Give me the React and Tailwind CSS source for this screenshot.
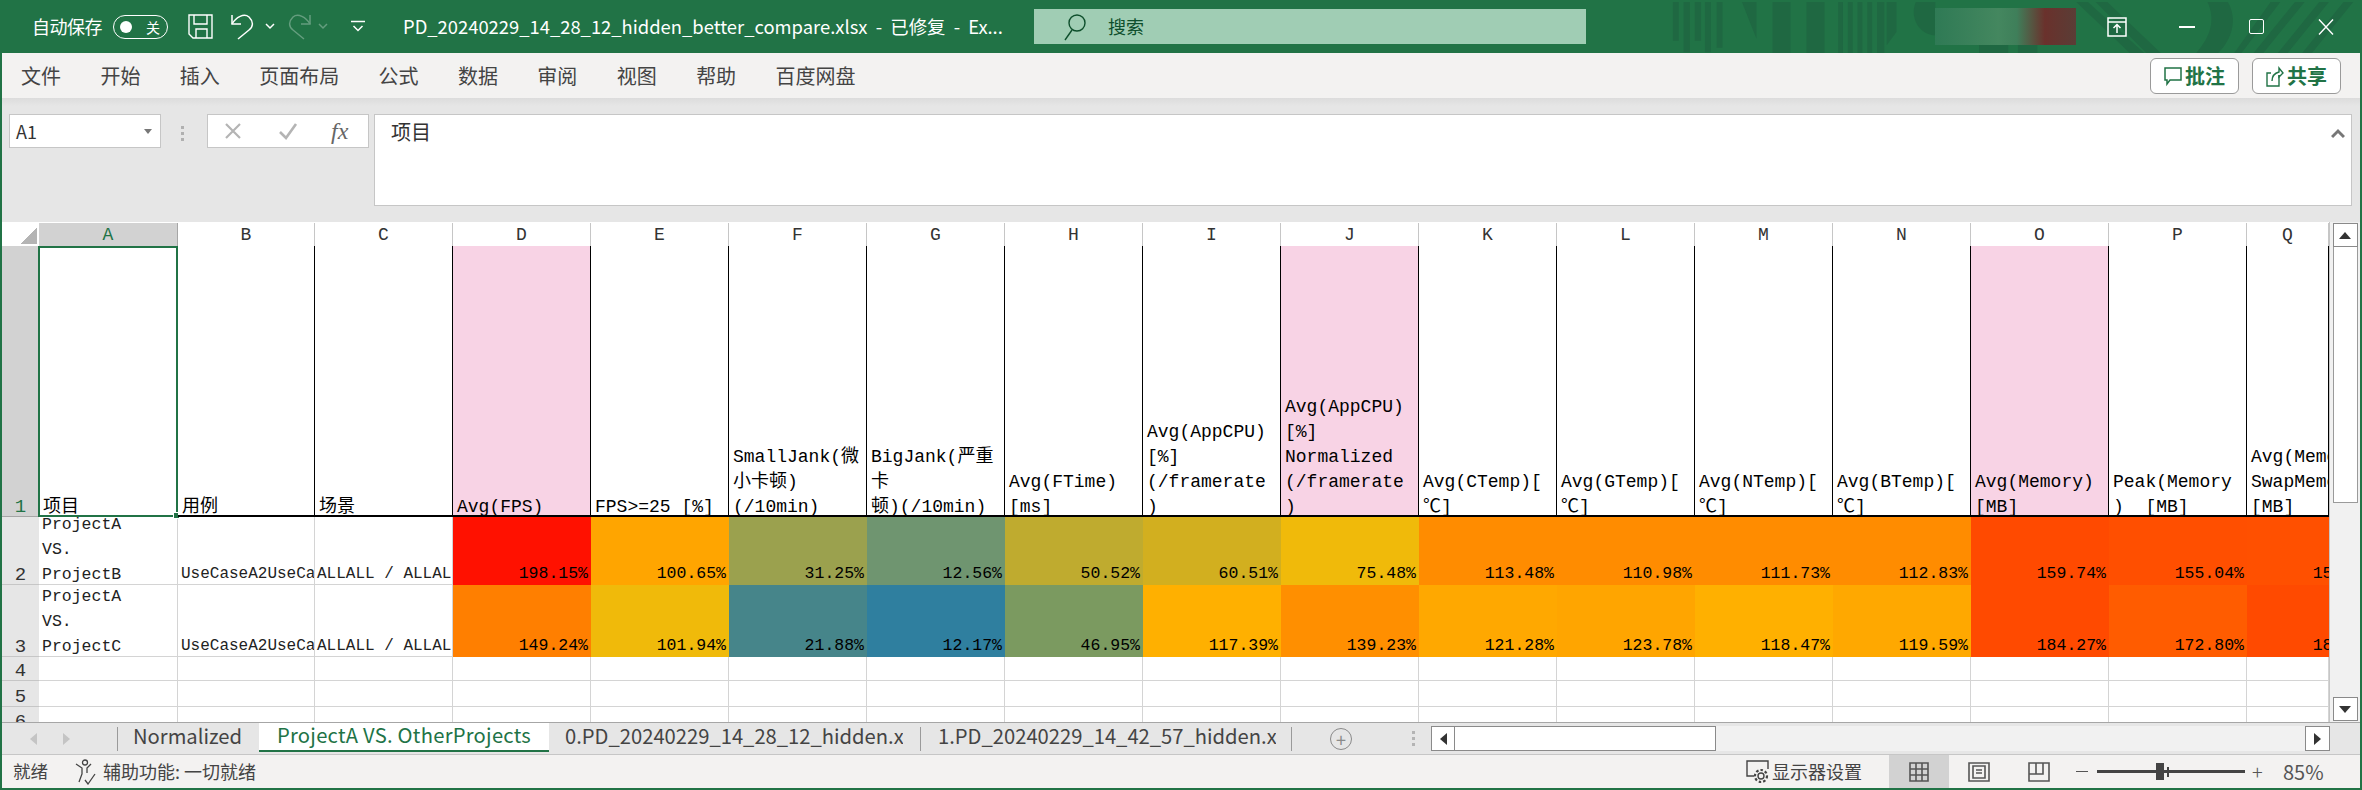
import React from 'react';

const GREEN = '#217346';
const columnsClass = 'grid grid-cols-[37px_139px_137px_138px_138px_138px_138px_138px_138px_138px_138px_138px_138px_138px_138px_138px_138px_82px]';
const columnLetters = ['A', 'B', 'C', 'D', 'E', 'F', 'G', 'H', 'I', 'J', 'K', 'L', 'M', 'N', 'O', 'P', 'Q'];
const ribbonTabs = ['文件', '开始', '插入', '页面布局', '公式', '数据', '审阅', '视图', '帮助', '百度网盘'];

const headers = [
  { lines: ['项目'] },
  { lines: ['用例'] },
  { lines: ['场景'] },
  { lines: ['Avg(FPS)'], pink: true },
  { lines: ['FPS>=25 [%]'] },
  { lines: ['SmallJank(微', '小卡顿)', '(/10min)'] },
  { lines: ['BigJank(严重', '卡', '顿)(/10min)'] },
  { lines: ['Avg(FTime)', '[ms]'] },
  { lines: ['Avg(AppCPU)', '[%]', '(/framerate', ')'] },
  { lines: ['Avg(AppCPU)', '[%]', 'Normalized', '(/framerate', ')'], pink: true },
  { lines: ['Avg(CTemp)[', '℃]'] },
  { lines: ['Avg(GTemp)[', '℃]'] },
  { lines: ['Avg(NTemp)[', '℃]'] },
  { lines: ['Avg(BTemp)[', '℃]'] },
  { lines: ['Avg(Memory)', '[MB]'], pink: true },
  { lines: ['Peak(Memory', ')  [MB]'] },
  { lines: ['Avg(Memory', 'SwapMemory', '[MB]'] },
];

const rows = [
  {
    num: 2,
    h: 'ProjectB',
    values: [
      ['198.15%', 'bg-[#ff1100]'], ['100.65%', 'bg-[#ffa500]'], ['31.25%', 'bg-[#9ba14e]'], ['12.56%', 'bg-[#6f9570]'],
      ['50.52%', 'bg-[#bfab2f]'], ['60.51%', 'bg-[#d2af1f]'], ['75.48%', 'bg-[#f0ba0a]'], ['113.48%', 'bg-[#ff8c00]'],
      ['110.98%', 'bg-[#ff8c00]'], ['111.73%', 'bg-[#ff8c00]'], ['112.83%', 'bg-[#ff8c00]'], ['159.74%', 'bg-[#ff4a00]'],
      ['155.04%', 'bg-[#ff4f00]'], ['157.31%', 'bg-[#ff5000]'],
    ],
  },
  {
    num: 3,
    h: 'ProjectC',
    values: [
      ['149.24%', 'bg-[#ff7f00]'], ['101.94%', 'bg-[#f0ba0a]'], ['21.88%', 'bg-[#46858a]'], ['12.17%', 'bg-[#2f7f9f]'],
      ['46.95%', 'bg-[#7b9a60]'], ['117.39%', 'bg-[#ffb000]'], ['139.23%', 'bg-[#ff8f00]'], ['121.28%', 'bg-[#ffa800]'],
      ['123.78%', 'bg-[#ffa500]'], ['118.47%', 'bg-[#ffb000]'], ['119.59%', 'bg-[#ffa800]'], ['184.27%', 'bg-[#ff4a00]'],
      ['172.80%', 'bg-[#ff5c00]'], ['181.46%', 'bg-[#ff4a00]'],
    ],
  },
];

const Undo = ({ className }) => (
  <svg width="24" height="26" viewBox="0 0 24 26" fill="none" stroke="currentColor" strokeWidth="1.5" className={className}>
    <path d="M2 1V10H11" />
    <path d="M2 10C6 3 14 -1 19 3C24 8 23 13 19 16L8 25" />
  </svg>
);

const Chevron = ({ className }) => (
  <svg width="10" height="7" viewBox="0 0 10 7" fill="none" stroke="currentColor" strokeWidth="1.5" className={className}>
    <path d="M1 1L5 5L9 1" />
  </svg>
);

const TitlePattern = () => (
  <svg viewBox="0 0 1568 159" preserveAspectRatio="none" className="absolute right-0 top-0 w-[762px] h-[53px]" fill="#1f6842">
    <path d="M150 6h12v116h-12zM172 6h13v151h-13zM195 6h13v116h-13zM216 6h12v151h-12zM240 6h12v137h-12z" />
    <path d="M292 6h30v110z" />
    <path d="M355 6h37v153h-37zM425 6h37v153h-37z" />
    <path d="M490 6h10v153h-10zM510 6h10v153h-10zM530 6h10v153h-10zM550 6h10v153h-10zM570 6h15v153h-15zM590 6h20v90l-20 40z" />
    <path d="M650 6h40v100c-30 0 -55 -50 -40 -100z" />
    <path d="M780 130h60v29h-60zM860 130h40v29h-40z" />
    <path d="M980 6h24l116 153h-30zM1020 6h24l110 153h-30z" />
    <path d="M1250 6h42c20 50 10 110 -20 153h-45c30 -50 40 -100 23 -153z" />
    <path d="M1380 6h20l-80 153h-15zM1430 6h20l-85 153h-20zM1480 6h20l-85 153h-20zM1530 6h20l-85 153h-20z" />
  </svg>
);

const TitleBar = () => (
  <div className="relative h-[53px] shrink-0 flex items-center text-white text-[18px]">
    <TitlePattern />
    <span className="relative ml-[32px] w-[71px] whitespace-nowrap tracking-[-0.5px]">自动保存</span>
    <div className="relative ml-[10px] w-[55px] h-[24px] rounded-full border border-white flex items-center pl-[6px] pr-[7px] justify-between">
      <div className="w-[12px] h-[12px] rounded-full bg-white" />
      <span className="text-[14px] leading-none">关</span>
    </div>
    <svg width="25" height="25" viewBox="0 0 25 25" fill="none" stroke="currentColor" strokeWidth="1.4" className="relative ml-[20px]">
      <path d="M1 1H24V24H5L1 20Z" />
      <path d="M6 1V10H19V1" />
      <path d="M8 24V15H19V24" />
    </svg>
    <Undo className="relative ml-[17px]" />
    <Chevron className="relative ml-[11px]" />
    <Undo className="relative ml-[13px] -scale-x-100 opacity-30" />
    <Chevron className="relative ml-[6px] opacity-30" />
    <svg width="14" height="13" viewBox="0 0 14 13" fill="none" stroke="currentColor" strokeWidth="1.5" className="relative ml-[23px]">
      <path d="M0 1.5H14" />
      <path d="M2.5 6L7 10.5L11.5 6" />
    </svg>
    <span className="relative ml-[38px] w-[602px] whitespace-nowrap overflow-hidden text-[18.4px]">
      PD_20240229_14_28_12_hidden_better_compare.xlsx&nbsp; - &nbsp;已修复&nbsp; - &nbsp;Ex...
    </span>
    <div className="relative ml-[29px] w-[552px] h-[35px] bg-[#a0cdb4] flex items-center text-[#0e4f2c]">
      <svg width="24" height="28" viewBox="0 0 24 28" fill="none" stroke="currentColor" strokeWidth="1.4" className="ml-[29px]">
        <circle cx="14" cy="10" r="8" />
        <path d="M9 17L2 27" />
      </svg>
      <span className="ml-[21px]">搜索</span>
    </div>
    <div className="relative ml-[349px] w-[141px] h-[37px] bg-[linear-gradient(90deg,#2f7a55,#44875f_45%,#3f7f5a_58%,#6a312c_78%,#5a3d36)]" />
    <svg width="20" height="20" viewBox="0 0 20 20" fill="none" stroke="currentColor" strokeWidth="1.5" className="relative ml-[31px]">
      <path d="M1 1H19V19H1Z" />
      <path d="M1 5H19" />
      <path d="M10 16V8M6.5 11L10 7.5L13.5 11" />
    </svg>
    <div className="relative ml-[52px] w-[16px] h-[2px] bg-white" />
    <div className="relative ml-[54px] w-[15px] h-[15px] border-[1.5px] border-white rounded-[2px]" />
    <svg width="16" height="16" viewBox="0 0 16 16" fill="none" stroke="currentColor" strokeWidth="1.4" className="relative ml-[54px]">
      <path d="M1 0.5L15 15.5M15 0.5L1 15.5" />
    </svg>
  </div>
);

const RibbonButton = ({ icon, label }) => (
  <button className="w-[89px] h-[36px] rounded-[6px] border border-[#9a9a9a] bg-white flex items-center justify-center gap-[3px] text-[20px] font-bold text-[#217346]">
    {icon}
    <span>{label}</span>
  </button>
);

const Ribbon = () => (
  <div className="h-[45px] shrink-0 bg-[#f3f2f1] flex items-center text-[#444444] text-[20px]">
    <div className="ml-[19px] flex gap-[39.4px]">
      {ribbonTabs.map((tab) => <span key={tab} className="whitespace-nowrap">{tab}</span>)}
    </div>
    <div className="ml-auto mr-[19px] flex gap-[13px]">
      <RibbonButton
        label="批注"
        icon={
          <svg width="18" height="22" viewBox="0 0 18 22" fill="none" stroke={GREEN} strokeWidth="1.5">
            <path d="M1 3H17V15H6L3 19V15H1Z" />
          </svg>
        }
      />
      <RibbonButton
        label="共享"
        icon={
          <svg width="18" height="24" viewBox="0 0 18 24" fill="none" stroke={GREEN} strokeWidth="1.4">
            <path d="M13 11V22H1V9H5" />
            <path d="M6 17C6 11 9 9 13 8V4L17 9L13 13V11" />
          </svg>
        }
      />
    </div>
  </div>
);

const FormulaBar = () => (
  <div className="h-[124px] shrink-0 bg-[linear-gradient(180deg,#dcdcdc,#e6e6e6_8px)] flex items-start pt-[16px]">
    <div className="ml-[7px] w-[152px] h-[34px] bg-white border border-[#c6c6c6] flex items-center justify-between pl-[6px] pr-[8px] text-[18px] text-[#333333]">
      <span>A1</span>
      <span className="w-0 h-0 border-x-[4px] border-x-transparent border-t-[5px] border-t-[#777777]" />
    </div>
    <div className="ml-[20px] mt-[12px] flex flex-col gap-[3px]">
      <div className="w-[3px] h-[3px] bg-[#b0b0b0]" />
      <div className="w-[3px] h-[3px] bg-[#b0b0b0]" />
      <div className="w-[3px] h-[3px] bg-[#b0b0b0]" />
    </div>
    <div className="ml-[23px] w-[162px] h-[34px] bg-white border border-[#c6c6c6] flex items-center">
      <svg width="18" height="18" viewBox="0 0 18 18" fill="none" stroke="#b4b4b4" strokeWidth="2.2" className="ml-[16px]">
        <path d="M2 2L16 16M16 2L2 16" />
      </svg>
      <svg width="20" height="18" viewBox="0 0 20 18" fill="none" stroke="#b4b4b4" strokeWidth="2.6" className="ml-[36px]">
        <path d="M2 10L8 16L18 2" />
      </svg>
      <span className="ml-[33px] italic font-['Liberation_Serif',serif] text-[24px] leading-none text-[#666666]">fx</span>
    </div>
    <div className="relative ml-[5px] w-[1978px] h-[92px] bg-white border border-[#c6c6c6] pl-[16px] text-[20px] text-[#333333] leading-[34px]">
      项目
      <svg width="14" height="11" viewBox="0 0 14 11" fill="none" stroke="#777777" strokeWidth="3" className="absolute right-[6px] top-[13px]">
        <path d="M1 9L7 3L13 9" />
      </svg>
    </div>
  </div>
);

const ColumnHeader = () => (
  <div className={`${columnsClass} h-[24px] font-['Liberation_Mono',monospace] text-[18px] text-[#333333] leading-[24px]`}>
    <div className="flex items-end justify-end pb-[3px] pr-[2px] border-b border-[#a6a6a6]">
      <div className="w-[17px] h-[17px] bg-[linear-gradient(135deg,transparent_50%,#b4b4b4_50%)]" />
    </div>
    {columnLetters.map((c, i) => (
      <div
        key={c}
        className={i === 0
          ? 'mt-[1px] bg-[#d2d2d2] text-[#217346] text-center border-r border-[#a6a6a6] border-b'
          : 'mt-[1px] text-center border-r border-[#c6c6c6] border-b border-b-[#a6a6a6]'}
      >
        {c}
      </div>
    ))}
  </div>
);

const RowNumber = ({ n, active }) => (
  <div
    className={active
      ? 'flex items-end justify-center bg-[#d2d2d2] text-[#217346] border-b border-[#a6a6a6] leading-[25px] text-[19px]'
      : 'flex items-end justify-center bg-[#e6e6e6] text-[#333333] border-b border-[#c6c6c6] leading-[25px] text-[19px] overflow-hidden'}
  >
    <span className="-mb-[4px]">{n}</span>
  </div>
);

const EmptyRow = ({ n }) => (
  <>
    <RowNumber n={n} />
    {columnLetters.map((c) => <div key={c} className="border-r border-b border-[#d4d4d4]" />)}
  </>
);

const Sheet = () => (
  <div className="w-[2327px] h-[500px] shrink-0 flex flex-col overflow-hidden bg-white">
    <ColumnHeader />
    <div className={`${columnsClass} grid-rows-[271px_68px_72px_24px_26px_25px] font-['Liberation_Mono','Noto_Sans_CJK_SC',monospace] text-[18px] text-black leading-[25px]`}>
      <RowNumber n={1} active />
      {headers.map((h, i) => (
        <div
          key={i}
          className={`relative flex flex-col justify-end whitespace-pre pl-[4px] border-r border-r-black border-b-2 border-b-black ${i === 0 ? 'overflow-visible' : 'overflow-hidden'} ${h.pink ? 'bg-[#f8d3e5]' : 'bg-white'}`}
        >
          <div className="-mb-[5px]">
            {h.lines.map((line) => <div key={line} className="h-[25px]">{line}</div>)}
          </div>
          {i === 0 && (
            <div className="absolute -left-[1px] right-[-1px] top-0 -bottom-[2px] border-2 border-[#217346]">
              <div className="absolute -right-[4px] -bottom-[4px] w-[7px] h-[7px] bg-[#217346] border border-white" />
            </div>
          )}
        </div>
      ))}

      {rows.map((row) => (
        <React.Fragment key={row.num}>
          <RowNumber n={row.num} />
          <div className="flex flex-col justify-end overflow-hidden pl-[3px] border-r border-[#d4d4d4] shadow-[inset_0_-1px_0_#d4d4d4] text-[16.5px] text-[#222222]">
            <div className="shrink-0">ProjectA</div>
            <div className="shrink-0">VS.</div>
            <div className="shrink-0 -mb-[2px]">{row.h}</div>
          </div>
          <div className="flex items-end overflow-hidden whitespace-pre pl-[3px] border-r border-[#d4d4d4] shadow-[inset_0_-1px_0_#d4d4d4] text-[16px] text-[#222222]">
            <span className="-mb-[2px]">UseCaseA2UseCaseA2</span>
          </div>
          <div className="flex items-end overflow-hidden whitespace-pre pl-[2px] border-r border-[#d4d4d4] shadow-[inset_0_-1px_0_#d4d4d4] text-[16px] text-[#222222]">
            <span className="-mb-[2px]">ALLALL / ALLALL</span>
          </div>
          {row.values.map(([value, color], i) => (
            <div key={value} className={`flex items-end overflow-hidden whitespace-pre text-[16.5px] ${color}`}>
              <div className={i === row.values.length - 1 ? 'w-[135px] shrink-0 -mb-[1px] text-right' : 'w-full -mb-[1px] pr-[3px] text-right'}>{value}</div>
            </div>
          ))}
        </React.Fragment>
      ))}

      <EmptyRow n={4} />
      <EmptyRow n={5} />
      <EmptyRow n={6} />
    </div>
  </div>
);

const ScrollButton = ({ dir }) => (
  <div className="w-[25px] h-[24px] mx-auto bg-white border border-[#8a8a8a] flex items-center justify-center shrink-0">
    <span className={dir === 'up'
      ? 'w-0 h-0 border-x-[6px] border-x-transparent border-b-[7px] border-b-[#333333]'
      : 'w-0 h-0 border-x-[6px] border-x-transparent border-t-[7px] border-t-[#333333]'} />
  </div>
);

const VerticalScroll = () => (
  <div className="flex-1 h-[500px] bg-[#f1f1f1] flex flex-col border-l border-[#c6c6c6] pt-[1px] pb-[1px]">
    <ScrollButton dir="up" />
    <div className="w-[25px] h-[256px] mx-auto bg-white border-x border-b border-[#9a9a9a] shrink-0" />
    <div className="flex-1" />
    <ScrollButton dir="down" />
  </div>
);

const Separator = ({ className }) => <div className={`w-px h-[24px] bg-[#9a9a9a] ${className}`} />;

const TabBar = () => (
  <div className="h-[33px] shrink-0 bg-[#e6e6e6] border-t border-[#a6a6a6] border-b border-b-[#c6c6c6] flex items-center text-[20.2px] text-[#444444]">
    <span className="ml-[28px] w-0 h-0 border-y-[6px] border-y-transparent border-r-[7px] border-r-[#c4c4c4]" />
    <span className="ml-[26px] w-0 h-0 border-y-[6px] border-y-transparent border-l-[7px] border-l-[#c4c4c4]" />
    <Separator className="ml-[47px]" />
    <span className="ml-[15px] -mt-[5px] w-[126px] whitespace-nowrap">Normalized</span>
    <div className="w-[290px] h-[29px] self-start bg-white border-b-2 border-[#217346] text-[#217346] text-center whitespace-nowrap leading-[24px] tracking-[0.25px]">ProjectA VS. OtherProjects</div>
    <span className="ml-[16px] -mt-[5px] w-[338px] whitespace-nowrap overflow-hidden">0.PD_20240229_14_28_12_hidden.x</span>
    <Separator className="ml-[17px]" />
    <span className="ml-[17px] -mt-[5px] w-[338px] whitespace-nowrap overflow-hidden">1.PD_20240229_14_42_57_hidden.x</span>
    <Separator className="ml-[15px]" />
    <div className="ml-[38px] w-[22px] h-[22px] rounded-full border border-[#8a8a8a] flex items-center justify-center text-[#8a8a8a] text-[18px] leading-none">+</div>
    <div className="ml-[60px] flex flex-col gap-[3px]">
      <div className="w-[3px] h-[3px] bg-[#b4b4b4]" />
      <div className="w-[3px] h-[3px] bg-[#b4b4b4]" />
      <div className="w-[3px] h-[3px] bg-[#b4b4b4]" />
    </div>
    <div className="ml-[16px] w-[899px] h-[25px] bg-[#f1f1f1] flex">
      <div className="w-[24px] bg-white border border-[#8a8a8a] flex items-center justify-center">
        <span className="w-0 h-0 border-y-[6px] border-y-transparent border-r-[7px] border-r-[#333333]" />
      </div>
      <div className="w-[261px] bg-white border-y border-r border-[#8a8a8a]" />
      <div className="flex-1" />
      <div className="w-[25px] bg-white border border-[#8a8a8a] flex items-center justify-center">
        <span className="w-0 h-0 border-y-[6px] border-y-transparent border-l-[7px] border-l-[#333333]" />
      </div>
    </div>
  </div>
);

const StatusBar = () => (
  <div className="h-[33px] shrink-0 bg-[#f3f2f1] flex items-center text-[17.5px] text-[#444444]">
    <span className="ml-[11px] whitespace-nowrap">就绪</span>
    <svg width="21" height="26" viewBox="0 0 21 26" fill="none" stroke="#444444" strokeWidth="1.3" className="ml-[27px]">
      <circle cx="10" cy="3.5" r="2.5" />
      <path d="M1 5L7 9V15L4 23M16 5L12 9V14" />
      <path d="M10 21L13 25L20 15" />
    </svg>
    <span className="ml-[7px] w-[152px] whitespace-nowrap text-[18px]">辅助功能: 一切就绪</span>
    <svg width="24" height="27" viewBox="0 0 24 27" fill="none" stroke="#444444" strokeWidth="1.4" className="ml-[1491px]">
      <path d="M8 18H1V3H22V11" />
      <circle cx="15" cy="18" r="3" />
      <circle cx="15" cy="18" r="6" strokeDasharray="2.5 2" strokeWidth="2.2" />
    </svg>
    <span className="ml-[2px] w-[90px] whitespace-nowrap text-[18px]">显示器设置</span>
    <div className="ml-[27px] w-[60px] h-full bg-[#d2d2d2] flex items-center justify-center">
      <svg width="20" height="20" viewBox="0 0 20 20" fill="none" stroke="#555555" strokeWidth="1.6">
        <path d="M1 1H19V19H1ZM1 7H19M1 13H19M7 1V19M13 1V19" />
      </svg>
    </div>
    <svg width="22" height="20" viewBox="0 0 22 20" fill="none" stroke="#555555" strokeWidth="1.6" className="ml-[19px]">
      <path d="M1 1H21V19H1ZM5 4H17V16H5ZM8 8H14M8 11H14" />
    </svg>
    <svg width="22" height="20" viewBox="0 0 22 20" fill="none" stroke="#555555" strokeWidth="1.6" className="ml-[38px]">
      <path d="M1 1H21V19H1ZM1 12H15V1M8 1V12" />
    </svg>
    <span className="ml-[26px] w-[12px] h-[1.5px] bg-[#555555]" />
    <div className="ml-[9px] w-[148px] h-[3px] bg-[#444444] flex items-center">
      <div className="ml-[59px] w-[8px] h-[17px] shrink-0 bg-[#444444]" />
      <div className="ml-[3px] w-[2px] h-[10px] shrink-0 bg-[#444444]" />
    </div>
    <span className="ml-[7px] w-[12px] text-[20px] font-light text-[#555555]">+</span>
    <span className="ml-[19px] text-[20px] text-[#555555]">85%</span>
  </div>
);

export default function App() {
  return (
    <div className="w-[2362px] h-[790px] overflow-hidden flex flex-col bg-[#217346] font-['Noto_Sans_CJK_SC',sans-serif]">
      <TitleBar />
      <div className="mx-[2px] flex flex-col">
        <Ribbon />
        <FormulaBar />
        <div className="flex bg-[#e6e6e6]">
          <Sheet />
          <VerticalScroll />
        </div>
        <TabBar />
        <StatusBar />
      </div>
    </div>
  );
}
